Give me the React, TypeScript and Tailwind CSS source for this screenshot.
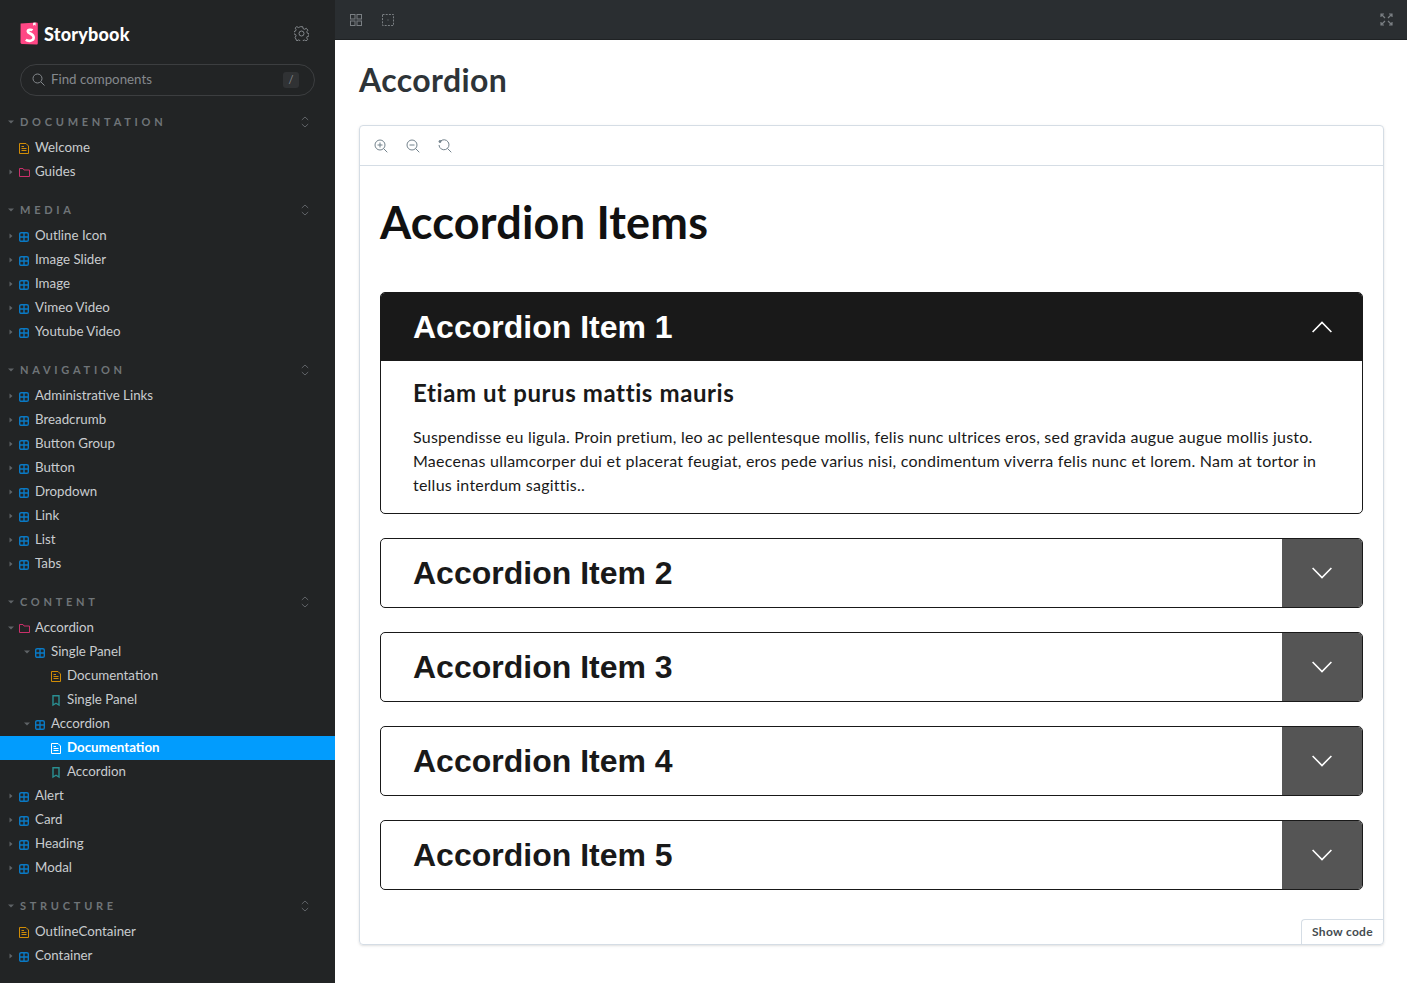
import React from 'react';

const SANS = 'font-["Lato","Open_Sans",sans-serif]';

type Kind = 'doc' | 'folder' | 'comp' | 'story';
type Row = { label: string; kind: Kind; depth?: number; arrow?: 'right' | 'down'; active?: boolean };
type Section = { title: string; rows: Row[] };

// Contenido de la barra lateral
const sections: Section[] = [
  {
    title: 'DOCUMENTATION',
    rows: [
      { label: 'Welcome', kind: 'doc' },
      { label: 'Guides', kind: 'folder', arrow: 'right' },
    ],
  },
  {
    title: 'MEDIA',
    rows: ['Outline Icon', 'Image Slider', 'Image', 'Vimeo Video', 'Youtube Video'].map((label) => ({
      label,
      kind: 'comp' as Kind,
      arrow: 'right' as const,
    })),
  },
  {
    title: 'NAVIGATION',
    rows: ['Administrative Links', 'Breadcrumb', 'Button Group', 'Button', 'Dropdown', 'Link', 'List', 'Tabs'].map(
      (label) => ({ label, kind: 'comp' as Kind, arrow: 'right' as const })
    ),
  },
  {
    title: 'CONTENT',
    rows: [
      { label: 'Accordion', kind: 'folder', arrow: 'down' },
      { label: 'Single Panel', kind: 'comp', arrow: 'down', depth: 1 },
      { label: 'Documentation', kind: 'doc', depth: 2 },
      { label: 'Single Panel', kind: 'story', depth: 2 },
      { label: 'Accordion', kind: 'comp', arrow: 'down', depth: 1 },
      { label: 'Documentation', kind: 'doc', depth: 2, active: true },
      { label: 'Accordion', kind: 'story', depth: 2 },
      { label: 'Alert', kind: 'comp', arrow: 'right' },
      { label: 'Card', kind: 'comp', arrow: 'right' },
      { label: 'Heading', kind: 'comp', arrow: 'right' },
      { label: 'Modal', kind: 'comp', arrow: 'right' },
    ],
  },
  {
    title: 'STRUCTURE',
    rows: [
      { label: 'OutlineContainer', kind: 'doc' },
      { label: 'Container', kind: 'comp', arrow: 'right' },
    ],
  },
];

const TreeIcon = ({ kind, active }: { kind: Kind; active?: boolean }) => {
  if (kind === 'doc') {
    const c = active ? '#ffffff' : '#d08c06';
    return (
      <svg width="10" height="12" viewBox="0 0 10 12" fill="none" stroke={c} strokeWidth="1">
        <path d="M.5.5h6.500l2.500 2.500v7.500h-9z" />
        <path d="M2.500 3.500h2.500M2.500 5.500h5M2.500 7.500h5" />
      </svg>
    );
  }
  if (kind === 'folder') {
    return (
      <svg width="11" height="10" viewBox="0 0 11 10" fill="none" stroke="#c9306a" strokeWidth="1">
        <path d="M.5 8.500v-8h3.500l1 1.500h5.500v6.500z" />
      </svg>
    );
  }
  if (kind === 'story') {
    return (
      <svg width="10" height="12" viewBox="0 0 10 12" fill="none" stroke="#2a8f92" strokeWidth="1.400">
        <path d="M2 .7h6v9.300l-3-1.800-3 1.800z" />
      </svg>
    );
  }
  return (
    <svg width="10" height="10" viewBox="0 0 10 10" fill="none" stroke="#0a79c4" strokeWidth="1.400">
      <rect x=".7" y=".7" width="8.600" height="8.600" rx="1.400" />
      <path d="M5 .7v8.600M.7 5h8.600" />
    </svg>
  );
};

const Arrow = ({ dir }: { dir: 'right' | 'down' }) => (
  <svg width="6" height="6" viewBox="0 0 6 6" fill="#5f6367">
    {dir === 'right' ? <path d="M1.500.5 4.500 3l-3 2.500z" /> : <path d="M0 1.500h6L3 4.500z" />}
  </svg>
);

const TreeRow = ({ label, kind, depth = 0, arrow, active }: Row) => {
  const padding = depth === 0 ? 'pl-[8px]' : depth === 1 ? 'pl-[24px]' : 'pl-[40px]';
  return (
    <div
      className={`h-6 flex items-center text-[13.300px] ${padding} ${
        active ? 'bg-[#029cfd] text-white font-bold' : 'text-[#c9cccf]'
      }`}
    >
      <span className="w-[6px] h-3 flex items-center mr-[5px]">{arrow && <Arrow dir={arrow} />}</span>
      <span className="w-[11px] flex justify-start mr-[5px] translate-y-[1px]">
        <TreeIcon kind={kind} active={active} />
      </span>
      <span>{label}</span>
    </div>
  );
};

const Sidebar = () => (
  <aside className="w-[335px] shrink-0 h-[983px] overflow-hidden bg-[#222425]">
    <div className="flex items-center justify-between pl-5 pr-[26px] pt-[21px]">
      <div className="flex items-center gap-[6px]">
        <svg width="18" height="23" viewBox="0 0 18 23">
          <path d="M.6 1.600 16.500.4c.8 0 1.300.5 1.300 1.300v19.500c0 .8-.6 1.400-1.400 1.300L1.800 21.900c-.7 0-1.200-.6-1.300-1.300z" fill="#ff4785" />
          <path d="M13.200.7l-.2 3 1.400-.9 1.200.9V.6z" fill="#fff" />
          <path d="M12.500 8.300c-.8-.6-4.700-1-4.700 1.100 0 2.400 5.900 2 5.900 6.200 0 3.600-5.500 4-7.900 2.200" fill="none" stroke="#fff" strokeWidth="2.600" />
        </svg>
        <span className={`${SANS} pt-[1px] text-white text-[18px] font-black leading-6 tracking-[0.2px]`}>Storybook</span>
      </div>
      <svg width="15" height="15" viewBox="0 0 15 15" fill="none" stroke="#85898d" strokeWidth="1">
        <circle cx="7.500" cy="7.500" r="2.500" />
        <path d="M6.300.7h2.400l.4 1.900 1.500.7 1.700-1 1.600 1.900-1.100 1.500.5 1.500 1.700.6v2.200l-1.800.5-.5 1.400 1 1.600-1.700 1.500-1.600-1-1.400.6-.5 1.700H6.300l-.4-1.800-1.500-.6-1.600 1L1.100 11.400l1-1.600-.6-1.400-1.800-.5V5.700l1.800-.6.600-1.500-1-1.500L2.800.6l1.600 1 1.500-.7z" />
      </svg>
    </div>
    <div className="mx-5 mt-[18px] h-8 rounded-full border border-[#3c3e40] flex items-center pl-[11px] pr-[15px] text-[#85898d]">
      <svg className="-translate-y-[1px]" width="13" height="13" viewBox="0 0 13 13" fill="none" stroke="#85898d" strokeWidth="1">
        <circle cx="5.500" cy="5.500" r="4.500" />
        <path d="m9 9 3.500 3.500" />
      </svg>
      <span className="ml-[6px] pb-[1px] text-[13.300px] flex-1">Find components</span>
      <span className="w-4 h-4 rounded-[3px] bg-[#303234] text-[11px] flex items-center justify-center">/</span>
    </div>
    <nav className="mt-[14px]">
      {sections.map((section) => (
        <section key={section.title} className="mb-[14px]">
          <div className="h-6 mb-[2px] flex items-center pl-[8px] pr-[26px]">
            <span className="w-[6px] mr-[6px] flex">
              <Arrow dir="down" />
            </span>
            <span className="flex-1 text-[11px] font-bold tracking-[0.34em] text-[#6f7478]">{section.title}</span>
            <svg width="8" height="12" viewBox="0 0 8 12" fill="none" stroke="#5f6367" strokeWidth="1">
              <path d="m.8 4 3.200-3 3.200 3M.8 8l3.200 3 3.200-3" />
            </svg>
          </div>
          {section.rows.map((row, i) => (
            <TreeRow key={`${row.label}-${i}`} {...row} />
          ))}
        </section>
      ))}
    </nav>
  </aside>
);

const Chevron = ({ up }: { up?: boolean }) => (
  <svg width="20" height="12" viewBox="0 0 20 12" fill="none" stroke="#fff" strokeWidth="1.600">
    <path d={up ? 'M.6 11 10 1.500 19.400 11' : 'M.6 1 10 10.500 19.400 1'} />
  </svg>
);

const ClosedItem = ({ n }: { n: number }) => (
  <div className="h-[70px] mt-6 flex rounded-[5px] border border-[#191919] overflow-hidden">
    <h3 className="flex-1 flex items-center pl-8 text-[32px] font-bold text-[#191919] font-['Liberation_Sans',sans-serif]">
      Accordion Item {n}
    </h3>
    <div className="w-[80px] bg-[#555555] flex items-center justify-center">
      <Chevron />
    </div>
  </div>
);

const ZoomIcon = ({ mode }: { mode: 'in' | 'out' | 'reset' }) => (
  <svg width="14" height="14" viewBox="0 0 14 14" fill="none" stroke="#73828c" strokeWidth="1">
    <path d={mode === 'reset' ? 'M2.200 2.500A5 5 0 1 1 1 6' : 'M11 6A5 5 0 1 1 1 6a5 5 0 0 1 10 0z'} />
    <path d="m9.500 9.500 3.800 3.800" />
    {mode !== 'reset' && <path d="M3.500 6h5" />}
    {mode === 'in' && <path d="M6 3.500v5" />}
    {mode === 'reset' && <circle cx="2" cy="2.500" r="1" fill="#73828c" />}
  </svg>
);

export default function App() {
  return (
    <div className={`${SANS} w-[1407px] h-[983px] flex overflow-hidden bg-white`}>
      <Sidebar />
      <main className="flex-1 min-w-0">
        <div className="h-10 bg-[#2a2e31] border-b border-[#1f2224] flex items-center justify-between pl-[15px] pr-[14px]">
          <div className="flex items-center gap-5">
            <svg width="12" height="12" viewBox="0 0 12 12" fill="none" stroke="#7a7f83" strokeWidth="1">
              <rect x=".5" y=".5" width="4.500" height="4.500" />
              <rect x="7" y=".5" width="4.500" height="4.500" />
              <rect x=".5" y="7" width="4.500" height="4.500" />
              <rect x="7" y="7" width="4.500" height="4.500" />
            </svg>
            <svg width="12" height="12" viewBox="0 0 12 12" fill="none" stroke="#7a7f83" strokeWidth="1">
              <rect x=".5" y=".5" width="11" height="11" strokeDasharray="2 1.200" />
              <path d="M5.500 6h1" />
            </svg>
          </div>
          <svg width="13" height="13" viewBox="0 0 13 13" fill="none" stroke="#7a7f83" strokeWidth="1.200">
            <path d="M1 1l4 4M12 1 8 5M1 12l4-4M12 12 8 8M1 4V1h3M12 4V1H9M1 9v3h3M12 9v3H9" />
          </svg>
        </div>
        <div className="pl-6 pr-[23px] pt-[22px]">
          <h1 className="text-[32px] font-bold text-[#2e3438] leading-[36px] mb-[27px] tracking-[0.4px]">Accordion</h1>
          <div className="relative h-[820px] rounded-[4px] border border-[#d5dde5] shadow-sm">
            <div className="h-10 border-b border-[#d5dde5] flex items-center gap-[18px] pl-[14px]">
              <ZoomIcon mode="in" />
              <ZoomIcon mode="out" />
              <ZoomIcon mode="reset" />
            </div>
            <div className="px-5">
              <h2 className="text-[45px] font-bold text-[#111111] leading-[54px] mt-[29px] mb-[43px] tracking-[0.2px]">Accordion Items</h2>
              <div className="rounded-[5px] border border-[#191919] overflow-hidden">
                <div className="h-[68px] bg-[#191919] flex items-center justify-between pl-8 pr-[30px]">
                  <h3 className="text-[32px] font-bold text-white font-['Liberation_Sans',sans-serif]">Accordion Item 1</h3>
                  <Chevron up />
                </div>
                <div className="px-8 pt-4 pb-4">
                  <h4 className="text-[24px] font-bold text-[#191919] leading-8 mb-[16px] tracking-[0.6px]">Etiam ut purus mattis mauris</h4>
                  <p className="text-[16px] text-[#191919] leading-6 tracking-[0.235px]">
                    Suspendisse eu ligula. Proin pretium, leo ac pellentesque mollis, felis nunc ultrices eros, sed gravida
                    augue augue mollis justo. Maecenas ullamcorper dui et placerat feugiat, eros pede varius nisi, condimentum
                    viverra felis nunc et lorem. Nam at tortor in tellus interdum sagittis..
                  </p>
                </div>
              </div>
              {[2, 3, 4, 5].map((n) => (
                <ClosedItem key={n} n={n} />
              ))}
            </div>
            <div className="absolute right-0 bottom-0 h-[25px] w-[82px] border-l border-t border-[#d5dde5] rounded-tl-[4px] flex items-center justify-center text-[12px] font-bold text-[#444b50] tracking-[0.3px]">
              Show code
            </div>
          </div>
        </div>
      </main>
    </div>
  );
}
